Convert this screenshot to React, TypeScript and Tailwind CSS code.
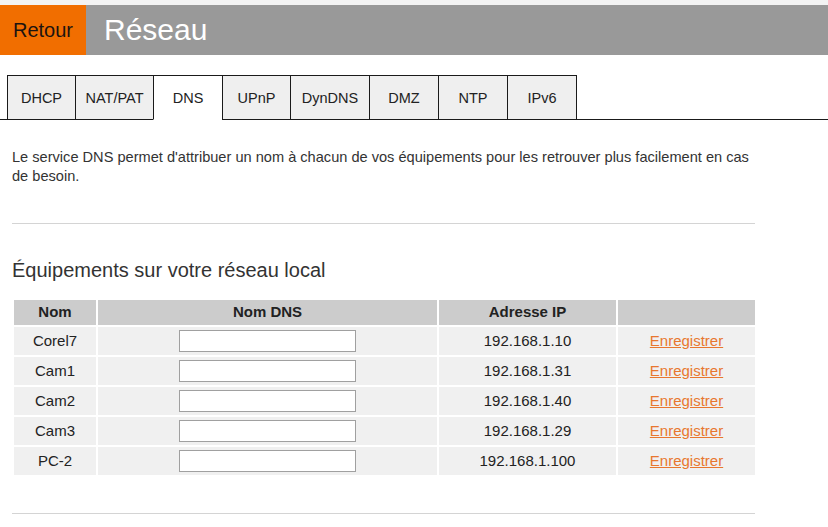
import React from "react";

const tabs = [
  { label: "DHCP", w: "w-[68px]" },
  { label: "NAT/PAT", w: "w-[78px]" },
  { label: "DNS", w: "w-[69px]", active: true },
  { label: "UPnP", w: "w-[68px]" },
  { label: "DynDNS", w: "w-[79px]" },
  { label: "DMZ", w: "w-[69px]" },
  { label: "NTP", w: "w-[69px]" },
  { label: "IPv6", w: "w-[70px]", last: true },
];

const rows = [
  { name: "Corel7", ip: "192.168.1.10" },
  { name: "Cam1", ip: "192.168.1.31" },
  { name: "Cam2", ip: "192.168.1.40" },
  { name: "Cam3", ip: "192.168.1.29" },
  { name: "PC-2", ip: "192.168.1.100" },
];

export default function App() {
  return (
    <div className="w-[828px] h-[527px] overflow-hidden bg-white font-['Liberation_Sans',Arial,sans-serif] text-[#222]">
      <div className="h-[5px] bg-[#f3f3f3]" />
      <div className="flex h-[50px] bg-[#999999]">
        <a className="flex w-[86px] items-center justify-center bg-[#f16e00] text-[20px] text-[#1c1410]">
          Retour
        </a>
        <h1 className="flex items-center pl-[18px] text-[30px] leading-none text-white">Réseau</h1>
      </div>

      <div className="mt-[20px] flex h-[45px]">
        <div className="w-[7px] border-b border-[#1a1a1a]" />
        {tabs.map((t) => (
          <div
            key={t.label}
            className={`${t.w} flex items-center justify-center border-l border-t text-[14.5px] ${
              t.last ? "border-r" : ""
            } ${
              t.active
                ? "border-b border-[#1a1a1a] border-b-white bg-white"
                : "border-b border-[#1a1a1a] bg-[#efefef]"
            }`}
          >
            <span className="pt-[3px]">{t.label}</span>
          </div>
        ))}
        <div className="flex-1 border-b border-[#1a1a1a]" />
      </div>

      <div className="w-[755px] pl-[12px]">
        <p className="mt-[28px] whitespace-nowrap text-[14.6px] leading-[19px] text-[#333]">
          Le service DNS permet d'attribuer un nom à chacun de vos équipements pour les retrouver plus facilement en cas
          <br />
          de besoin.
        </p>
        <div className="mt-[37px] h-px bg-[#d4d4d4]" />
        <h2 className="mt-[35px] text-[20px] leading-[22px] text-[#333]">Équipements sur votre réseau local</h2>

        <div className="mt-[19px] ml-[2px] grid grid-cols-[82px_339px_177px_137px] gap-[2px] text-[15px]">
          <div className="flex h-[25px] items-center justify-center bg-[#cccccc] font-bold">Nom</div>
          <div className="flex h-[25px] items-center justify-center bg-[#cccccc] font-bold">Nom DNS</div>
          <div className="flex h-[25px] items-center justify-center bg-[#cccccc] font-bold">Adresse IP</div>
          <div className="h-[25px] bg-[#cccccc]" />
          {rows.map((r) => (
            <React.Fragment key={r.name}>
              <div className="flex h-[28px] items-center justify-center bg-[#f0f0f0]">{r.name}</div>
              <div className="flex h-[28px] items-center justify-center bg-[#f0f0f0]">
                <input
                  type="text"
                  className="h-[22px] w-[177px] border border-[#a0a0a0] bg-white outline-none"
                />
              </div>
              <div className="flex h-[28px] items-center justify-center bg-[#f0f0f0]">{r.ip}</div>
              <div className="flex h-[28px] items-center justify-center bg-[#f0f0f0]">
                <a className="cursor-pointer text-[#e8772e] underline">Enregistrer</a>
              </div>
            </React.Fragment>
          ))}
        </div>

        <div className="mt-[38px] h-px bg-[#d4d4d4]" />
      </div>
    </div>
  );
}
